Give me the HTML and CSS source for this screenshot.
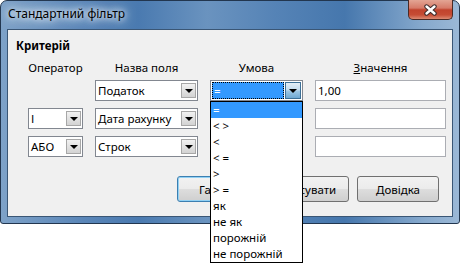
FILE: index.html
```html
<!DOCTYPE html>
<html lang="uk">
<head>
  <meta charset="UTF-8">
  <meta name="viewport" content="width=device-width, initial-scale=1.0">
  <title>Стандартний фільтр</title>
  <link rel="stylesheet" href="styles.css">
</head>
<body>
  <div class="window">
    <div class="titlebar">
      <span class="title">Стандартний фільтр</span>
      <button class="close" type="button">
        <svg width="15" height="12" viewBox="0 0 15 12">
          <path d="M3.5 2.5 L11.5 9.5 M11.5 2.5 L3.5 9.5" stroke="#3b2a2a" stroke-width="4.4" stroke-linecap="round"/>
          <path d="M3.5 2.5 L11.5 9.5 M11.5 2.5 L3.5 9.5" stroke="#ffffff" stroke-width="2.4" stroke-linecap="round"/>
        </svg>
      </button>
    </div>

    <div class="panel">
      <h2 class="section">Критерій</h2>

      <div class="criteria">
        <span class="col-label">Оператор</span>
        <span class="col-label">Назва поля</span>
        <span class="col-label">Умова</span>
        <span class="col-label"><u>З</u>начення</span>

        <div></div>
        <div class="combo"><span class="combo-text">Податок</span><span class="combo-btn"></span></div>
        <div class="combo focused"><span class="combo-text">=</span><span class="combo-btn"></span></div>
        <div class="field">1,00</div>

        <div class="combo"><span class="combo-text">І</span><span class="combo-btn"></span></div>
        <div class="combo"><span class="combo-text">Дата рахунку</span><span class="combo-btn"></span></div>
        <div class="combo"><span class="combo-text"></span><span class="combo-btn"></span></div>
        <div class="field"></div>

        <div class="combo"><span class="combo-text">АБО</span><span class="combo-btn"></span></div>
        <div class="combo"><span class="combo-text">Строк</span><span class="combo-btn"></span></div>
        <div class="combo"><span class="combo-text"></span><span class="combo-btn"></span></div>
        <div class="field"></div>
      </div>

      <div class="buttons">
        <button class="btn default" type="button">Гаразд</button>
        <button class="btn" type="button">Скасувати</button>
        <button class="btn" type="button"><u>Д</u>овідка</button>
      </div>

      <ul class="dropdown">
        <li class="selected">=</li>
        <li>&lt; &gt;</li>
        <li>&lt;</li>
        <li>&lt; =</li>
        <li>&gt;</li>
        <li>&gt; =</li>
        <li>як</li>
        <li>не як</li>
        <li>порожній</li>
        <li>не порожній</li>
      </ul>
    </div>
  </div>
</body>
</html>
```

FILE: styles.css
```css
html {
  height: 100%;
}

body {
  margin: 0;
  min-height: 100%;
  background: #ffffff;
  font-family: "Noto Sans", "Open Sans", sans-serif;
  font-size: 11.5px;
  color: #000000;
}

.window {
  width: 460px;
  box-sizing: border-box;
  border: 1px solid #22364f;
  border-radius: 7px 7px 3px 3px;
  padding: 0 6px 6px 6px;
  background: linear-gradient(90deg, #7ea2c8 0%, #5a86b8 18%, #4a7ab0 30%, #6a93bf 45%, #5583b6 60%, #4677ad 75%, #86a9cd 92%, #9bb8d6 100%);
}

.titlebar {
  display: flex;
  align-items: flex-start;
  height: 28px;
  padding-left: 1px;
}

.title {
  margin-top: 5px;
  font-size: 12px;
  line-height: 16px;
  color: #000000;
  text-shadow: 0 0 6px #ffffff, 0 0 10px #dfeaf5, 0 0 14px #dfeaf5;
}

.close {
  margin-left: auto;
  margin-top: -1px;
  width: 45px;
  height: 20px;
  padding: 0;
  border: 1px solid #4b2a24;
  border-top: none;
  border-radius: 0 0 5px 5px;
  background: linear-gradient(#e3a594 0%, #d67b69 42%, #c1432d 52%, #c64c34 78%, #dc8a72 100%);
  display: flex;
  align-items: center;
  justify-content: center;
}

.panel {
  position: relative;
  height: 188px;
  box-sizing: border-box;
  border: 1px solid #3a5675;
  background: #f0f0f0;
}

.section {
  margin: 0;
  padding: 8px 0 0 8px;
  font-size: 11.5px;
  font-weight: bold;
  line-height: 16px;
}

.criteria {
  display: grid;
  grid-template-columns: 55px 103px 93px 131px;
  grid-template-rows: 12px 21px 21px 21px;
  column-gap: 12px;
  row-gap: 7px;
  margin: 7px 0 0 20px;
}

.col-label {
  text-align: center;
  line-height: 14px;
  white-space: nowrap;
}

.combo {
  display: flex;
  align-items: center;
  box-sizing: border-box;
  border: 1px solid #828790;
  background: #ffffff;
  padding: 1px;
}

.combo-text {
  flex: 1;
  align-self: stretch;
  padding-left: 1px;
  line-height: 17px;
  white-space: nowrap;
  overflow: hidden;
}

.combo-btn {
  width: 15px;
  height: 15px;
  margin-left: 1px;
  box-sizing: border-box;
  border: 1px solid #a7a7a7;
  background: linear-gradient(#f2f2f2, #e2e2e2 50%, #d3d3d3);
  display: flex;
  align-items: center;
  justify-content: center;
}

.combo-btn::after {
  content: "";
  border-left: 4px solid transparent;
  border-right: 4px solid transparent;
  border-top: 4px solid #000000;
  margin-top: 1px;
}

.combo.focused .combo-text {
  background: #3399ff;
  color: #ffffff;
  outline: 1px dotted #000000;
  outline-offset: -1px;
  padding-left: 2px;
}

.combo.focused .combo-btn {
  width: 16px;
  height: 17px;
  border-color: #3c6f96;
  background: linear-gradient(#e4eef6, #c4dcee 45%, #9cc6e4 55%, #6fa9d3);
}

.field {
  box-sizing: border-box;
  border: 1px solid #abadb3;
  background: #ffffff;
  padding-left: 2px;
  line-height: 19px;
}

.buttons {
  display: flex;
  justify-content: flex-end;
  gap: 8px;
  margin-top: 19px;
  padding-right: 13px;
}

.btn {
  width: 82px;
  height: 26px;
  padding: 0;
  border: 1px solid #707070;
  border-radius: 3px;
  background: linear-gradient(#f2f2f2 0%, #ebebeb 48%, #dddddd 52%, #cfcfcf 100%);
  font-family: inherit;
  font-size: 11.5px;
  color: #000000;
}

.btn.default {
  border-color: #3c7fb1;
  box-shadow: inset 0 0 0 1px #92d1f4;
}

.dropdown {
  position: absolute;
  z-index: 2;
  left: 202px;
  top: 71px;
  width: 93px;
  margin: 0;
  padding: 0;
  list-style: none;
  box-sizing: border-box;
  border: 1px solid #000000;
  background: #ffffff;
}

.dropdown li {
  height: 16px;
  line-height: 16px;
  padding-left: 2px;
  white-space: nowrap;
}

.dropdown li.selected {
  background: #3399ff;
  color: #ffffff;
}
```
